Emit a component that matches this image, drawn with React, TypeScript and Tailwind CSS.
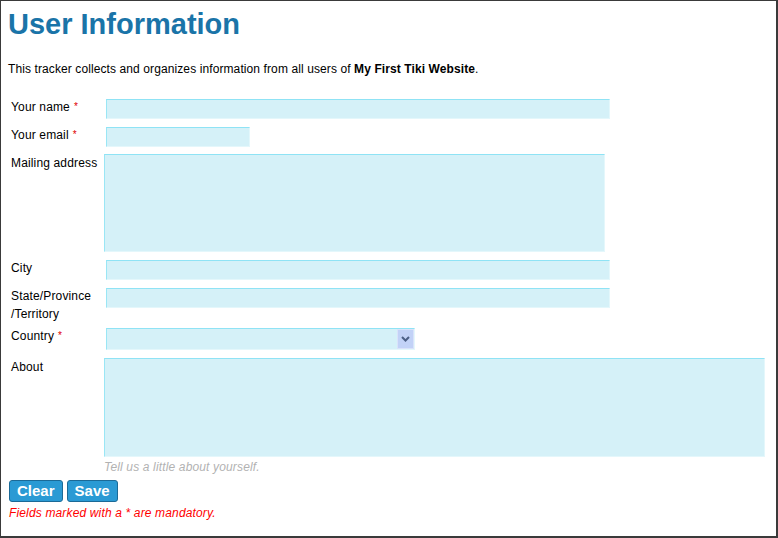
import React from "react";

const inputCls =
  "bg-[#d5f1f8] border-t border-l border-r border-b border-t-[#8fe3f5] border-l-[#9ae6f5] border-r-[#e4f7fb] border-b-[#e4f7fb] box-border";

function Req() {
  return <span className="text-[#e00000] text-[10px] align-top ml-[4px]">*</span>;
}

export default function App() {
  return (
    <div
      className="w-[778px] h-[538px] box-border bg-white border-t border-l border-r-2 border-b-2 border-[#3a3a3a] overflow-hidden text-black"
      style={{ fontFamily: '"Liberation Sans", Arial, sans-serif' }}
    >
      <div className="pl-[7px] pt-[6px] tracking-[0.15px]">
        <h1 className="text-[29px] leading-[34px] font-bold text-[#1a74a8] m-0 tracking-normal">User Information</h1>
        <p className="mt-[19px] text-[12px] leading-[18px] tracking-[0.1px]">
          This tracker collects and organizes information from all users of{" "}
          <b>My First Tiki Website</b>.
        </p>

        {/* Your name */}
        <div className="flex items-start mt-[20px] text-[12px] leading-[18px]">
          <div className="w-[98px] pl-[3px] shrink-0">
            Your name<Req />
          </div>
          <div className={`${inputCls} mt-[1px] w-[504px] h-[20px]`} />
        </div>

        {/* Your email */}
        <div className="flex items-start mt-[7px] text-[12px] leading-[18px]">
          <div className="w-[98px] pl-[3px] shrink-0">
            Your email<Req />
          </div>
          <div className={`${inputCls} mt-[1px] w-[144px] h-[20px]`} />
        </div>

        {/* Mailing address */}
        <div className="flex items-start mt-[7px] text-[12px] leading-[18px]">
          <div className="w-[98px] pl-[3px] shrink-0 whitespace-nowrap">Mailing address</div>
          <div className={`${inputCls} -ml-[2px] w-[501px] h-[98px]`} />
        </div>

        {/* City */}
        <div className="flex items-start mt-[7px] text-[12px] leading-[18px]">
          <div className="w-[98px] pl-[3px] shrink-0">City</div>
          <div className={`${inputCls} mt-[1px] w-[504px] h-[20px]`} />
        </div>

        {/* State */}
        <div className="flex items-start mt-[7px] text-[12px] leading-[18px]">
          <div className="w-[98px] pl-[3px] shrink-0">
            State/Province
            <br />
            /Territory
          </div>
          <div className={`${inputCls} mt-[1px] w-[504px] h-[20px]`} />
        </div>

        {/* Country */}
        <div className="flex items-start mt-[4px] text-[12px] leading-[18px]">
          <div className="w-[98px] pl-[3px] shrink-0">
            Country<Req />
          </div>
          <div className={`${inputCls} mt-[1px] w-[309px] h-[22px] flex justify-end items-stretch`}>
            <div className="w-[17px] bg-[#c2d2f7] border border-[#d9e2fa] flex items-center justify-center">
              <svg width="9" height="6" viewBox="0 0 9 6">
                <path d="M1 1 L4.5 4.5 L8 1" fill="none" stroke="#4b5f86" strokeWidth="2" />
              </svg>
            </div>
          </div>
        </div>

        {/* About */}
        <div className="flex items-start mt-[8px] text-[12px] leading-[18px]">
          <div className="w-[98px] pl-[3px] shrink-0">About</div>
          <div className="-ml-[2px] flex flex-col">
            <div className={`${inputCls} w-[661px] h-[99px]`} />
            <div className="italic text-[#b2b2b2] mt-[1px]">Tell us a little about yourself.</div>
          </div>
        </div>

        <div className="flex mt-[4px] ml-[1px] tracking-normal">
          <button className="h-[22px] px-[7px] bg-[#2a9ad4] border border-[#1b6a97] rounded-[3px] text-white font-bold text-[15px] leading-[18px] mr-[4px]">
            Clear
          </button>
          <button className="h-[22px] px-[7px] bg-[#2a9ad4] border border-[#1b6a97] rounded-[3px] text-white font-bold text-[15px] leading-[18px]">
            Save
          </button>
        </div>
        <div className="mt-[2px] ml-[1px] italic text-[#ff0000] text-[12px] leading-[18px]">
          Fields marked with a * are mandatory.
        </div>
      </div>
    </div>
  );
}
